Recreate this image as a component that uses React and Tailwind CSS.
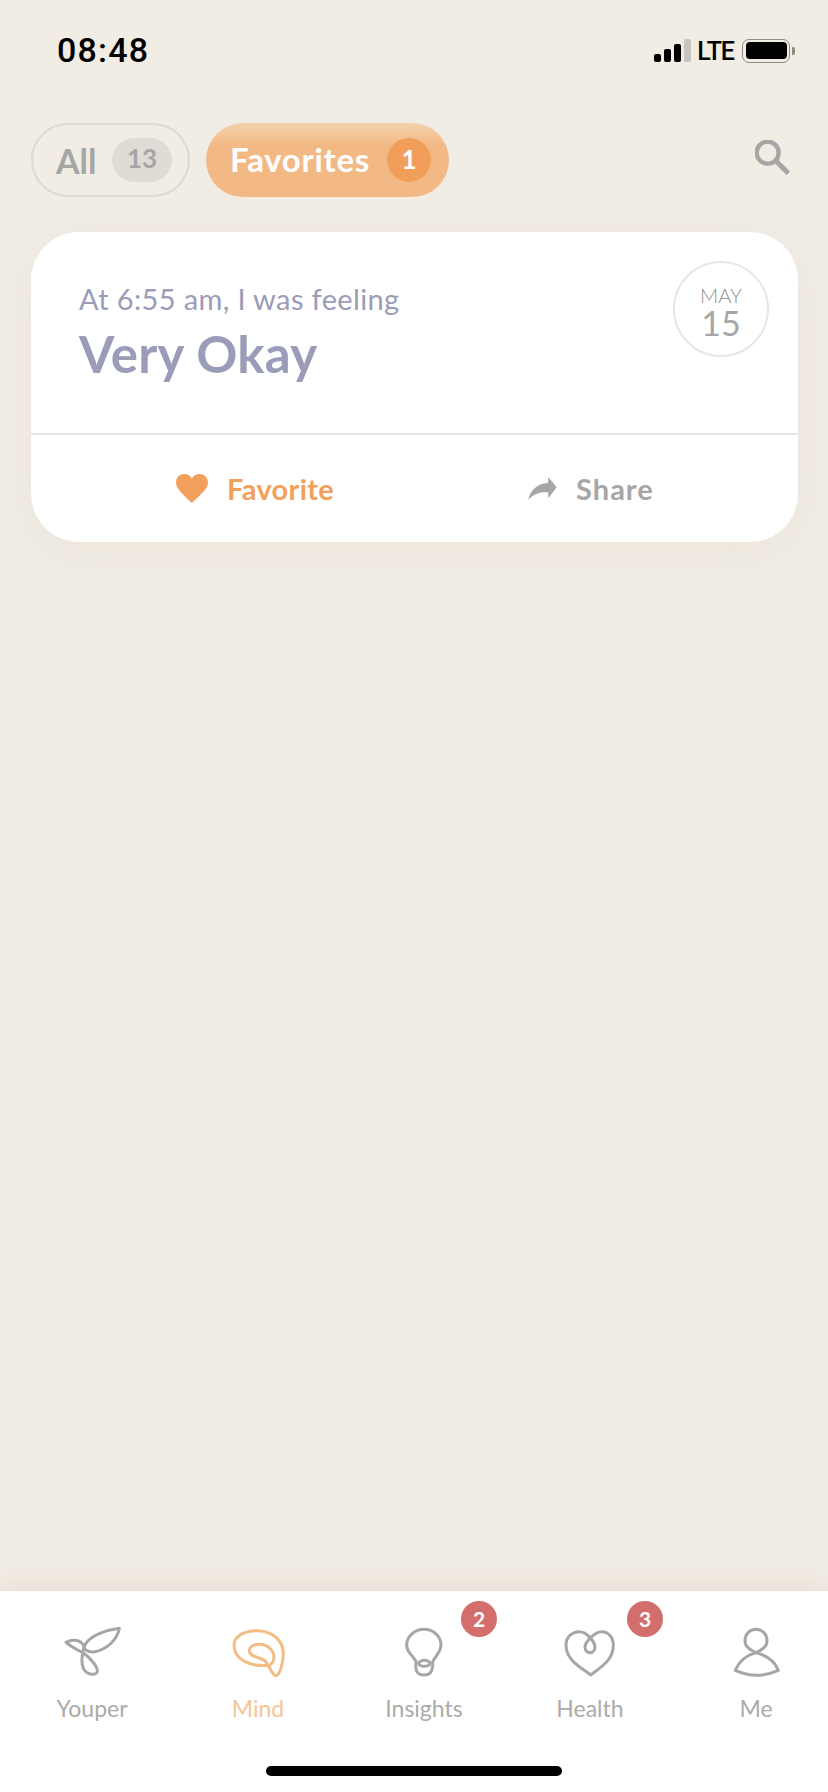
import React from "react";

const Glyph = ({ box, color = "#a6a6a6", children }) => (
  <svg
    viewBox={box}
    className="h-[60px] w-[60px]"
    fill="none"
    stroke={color}
    strokeWidth="9"
    strokeLinecap="round"
    strokeLinejoin="round"
  >
    {children}
  </svg>
);

const tabs = [
  {
    label: "Youper",
    box: "66 33 180 180",
    paths: [
      "M238 55C200 60 150 75 135 105C128 120 145 128 165 125C200 118 232 90 238 55Z",
      "M78 97C100 85 125 90 132 110C128 130 120 150 130 175C140 195 172 200 172 182C172 165 140 135 128 128C110 118 90 108 78 97Z",
    ],
  },
  {
    label: "Mind",
    box: "54 33 180 180",
    active: true,
    paths: [
      "M180 165C150 170 75 165 72 105C72 75 110 62 140 62C185 62 220 90 220 130C220 155 210 197 197 197C187 197 180 170 165 152C150 142 118 140 118 123C118 108 135 103 148 103C172 103 192 120 192 142C192 152 187 160 180 165Z",
    ],
  },
  {
    label: "Insights",
    box: "42 33 180 180",
    badge: 2,
    paths: [
      "M108 155C100 135 80 130 80 105C80 78 105 58 132 58C160 58 183 78 183 105C183 125 165 140 158 155C160 185 150 195 132 195C112 195 105 185 108 155Z",
      "M116 160C116 155 124 151 133 151C142 151 150 155 150 160C150 165 142 169 133 169C124 169 116 165 116 160Z",
    ],
  },
  {
    label: "Health",
    box: "60 33 180 180",
    badge: 3,
    paths: [
      "M152 195C120 170 78 150 78 105C78 80 98 65 118 65C140 65 165 95 165 112C165 122 158 128 150 128C142 128 135 122 135 112C135 95 165 65 185 65C205 65 220 82 220 105C220 150 185 170 152 195Z",
    ],
  },
  {
    label: "Me",
    box: "75 33 180 180",
    paths: [
      "M103 181C145 200 190 200 232 181C220 150 190 135 165 128C140 135 115 150 103 181Z",
      "M165 128C145 118 132 110 132 92C132 72 147 58 165 58C183 58 198 72 198 92C198 110 185 118 165 128Z",
    ],
  },
];

const StatusBar = () => (
  <div className="flex h-[123px] items-start justify-between pl-[57px] pr-[33px] pt-[31px]">
    <span className="font-['Roboto',sans-serif] text-[34px] font-medium leading-[38px] tracking-[1.2px] text-black">
      08:48
    </span>
    <div className="flex items-center pt-[6px]">
      <div className="flex items-end gap-[3px]">
        <span className="h-[8px] w-[7px] rounded-[2px] bg-black" />
        <span className="h-[13px] w-[7px] rounded-[2px] bg-black" />
        <span className="h-[18px] w-[7px] rounded-[2px] bg-black" />
        <span className="h-[23px] w-[7px] rounded-[2px] bg-[#c8c5be]" />
      </div>
      <span className="ml-[6px] mt-[3px] font-['Roboto',sans-serif] text-[25px] font-medium leading-[24px] tracking-[-1px] text-black">
        LTE
      </span>
      <div className="ml-[8px] flex h-[24px] w-[48px] items-center justify-center rounded-[7px] border-[1.5px] border-[#8f8c85]">
        <span className="h-[17px] w-[41px] rounded-[4px] bg-black" />
      </div>
      <span className="ml-[2px] h-[8px] w-[3px] rounded-r-[2px] bg-[#8f8c85]" />
    </div>
  </div>
);

const FilterRow = () => (
  <div className="flex items-center justify-between pl-[31px] pr-[38px]">
    <div className="flex gap-[16px]">
      <div className="flex h-[74px] w-[159px] items-center justify-between rounded-full border-2 border-[#dcd9d3] pl-[23px] pr-[16px]">
        <span className="text-[34px] font-bold text-[#a6a6a6]">All</span>
        <span className="mb-[1px] flex h-[44px] w-[60px] items-center justify-center rounded-full bg-[#dfdbd5] pb-[3px] text-[26px] font-bold text-[#a6a6a6]">
          13
        </span>
      </div>
      <div className="flex h-[74px] w-[243px] items-center justify-between rounded-full bg-gradient-to-b from-[#f1d2ae] to-[#f3b985] to-30% pl-[24px] pr-[18px]">
        <span className="text-[33px] font-bold tracking-[0.7px] text-white">Favorites</span>
        <span className="flex h-[44px] w-[44px] items-center justify-center rounded-full bg-[#f19e5a] pb-[2px] text-[26px] font-bold text-white">
          1
        </span>
      </div>
    </div>
    <svg viewBox="342 360 105 105" className="mb-[6px] h-[35px] w-[35px]" fill="none" stroke="#a6a6a6" strokeWidth="13">
      <circle cx="380" cy="398" r="33" />
      <path d="M405 423L442 460" strokeWidth="15" />
    </svg>
  </div>
);

const EntryCard = () => (
  <div className="mx-[31px] mt-[35px] h-[310px] w-[767px] overflow-hidden rounded-[48px] bg-white shadow-[0_10px_40px_rgba(150,130,100,0.05)]">
    <div className="flex h-[203px] items-start justify-between border-b-2 border-[#e6e6e6] pl-[48px] pr-[29px] pt-[29px]">
      <div className="pt-[20px]">
        <p className="text-[29px] leading-[36px] tracking-[0.37px] text-[#9a9cb8]">At 6:55 am, I was feeling</p>
        <p className="mt-[7px] text-[51px] font-bold leading-[60px] tracking-[0.3px] text-[#9a9cb8]">Very Okay</p>
      </div>
      <div className="flex h-[96px] w-[96px] flex-col items-center justify-center rounded-full border-2 border-[#e6e6e6] pt-[3px] text-[#a6a6a6]">
        <span className="text-[20px] font-light leading-[24px] text-[#8f8f8f]">MAY</span>
        <span className="text-[34px] leading-[31px]">15</span>
      </div>
    </div>
    <div className="flex h-[105px] items-center pt-[2px]">
      <div className="ml-[145px] flex items-center gap-[19px]">
        <svg viewBox="48 72 97 88" className="h-[29px] w-[32px]" fill="#f3a05c">
          <path d="M96 160C70 135 48 118 48 98C48 82 60 72 73 72C83 72 91 77 96 85C101 77 109 72 119 72C132 72 145 82 145 98C145 118 122 135 96 160Z" />
        </svg>
        <span className="text-[29px] font-bold tracking-[0.3px] text-[#f3a05c]">Favorite</span>
      </div>
      <div className="ml-[194px] flex items-center gap-[19px]">
        <svg viewBox="85 85 83 67" className="h-[23px] w-[29px]" fill="#a6a6a6">
          <path d="M168 115L143 85L143 102C110 105 90 125 85 152C100 135 120 128 143 130L143 147Z" />
        </svg>
        <span className="text-[29px] font-bold tracking-[1px] text-[#a6a6a6]">Share</span>
      </div>
    </div>
  </div>
);

const TabBar = () => (
  <div className="relative h-[201px] bg-white shadow-[0_-6px_20px_rgba(170,140,110,0.12)]">
    <div className="grid grid-cols-5 gap-x-[36px] pl-[27px] pr-[7px] pt-[30px]">
      {tabs.map((tab) => (
        <div key={tab.label} className="relative flex flex-col items-center">
          <Glyph box={tab.box} color={tab.active ? "#f3bc85" : "#a6a6a6"}>
            {tab.paths.map((d) => (
              <path key={d} d={d} />
            ))}
          </Glyph>
          <span className={`mt-[13px] text-[23px] leading-[28px] ${tab.active ? "text-[#f5c596]" : "text-[#ababab]"}`}>
            {tab.label}
          </span>
          {tab.badge && (
            <span className="absolute left-[102px] top-[-20px] flex h-[36px] w-[36px] items-center justify-center rounded-full bg-[#d26e6c] text-[21px] font-bold text-white">
              {tab.badge}
            </span>
          )}
        </div>
      ))}
    </div>
    <div className="absolute bottom-[16px] left-[266px] h-[10px] w-[296px] rounded-full bg-black" />
  </div>
);

export default function App() {
  return (
    <div className="flex h-[1792px] w-[828px] flex-col overflow-hidden bg-[#f1ece4] font-['Lato',sans-serif]">
      <div className="flex-1">
        <StatusBar />
        <FilterRow />
        <EntryCard />
      </div>
      <TabBar />
    </div>
  );
}
